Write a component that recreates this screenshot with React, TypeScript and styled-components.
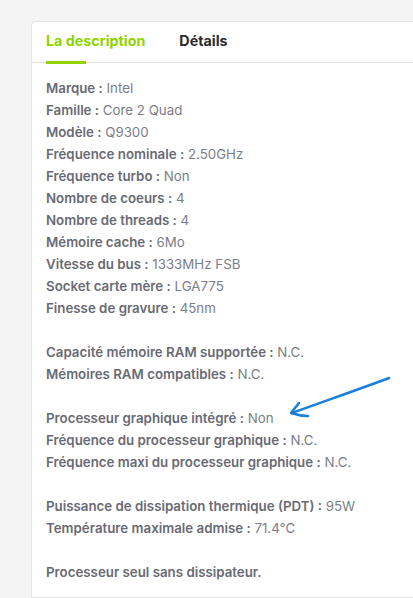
import React from "react";
import styled, { createGlobalStyle } from "styled-components";

const Global = createGlobalStyle`
  html, body { margin: 0; padding: 0; background: #f4f4f4; }
  body { font-family: Inter, "Open Sans", sans-serif; }
`;

const Page = styled.div`
  padding: 21px 0 0 31px;
  height: 598px;
  box-sizing: border-box;
  overflow: hidden;
`;

const Card = styled.div`
  position: relative;
  background: #fff;
  border: 1px solid #e4e4e4;
  border-right: none;
  border-top-left-radius: 5px;
  height: 100%;
  box-sizing: border-box;
`;

const TabBar = styled.div`
  display: flex;
  gap: 34px;
  height: 40px;
  padding-left: 14px;
  border-bottom: 1px solid #e3e3e3;
`;

const Tab = styled.div<{ $active?: boolean }>`
  position: relative;
  display: flex;
  align-items: center;
  padding-bottom: 4px;
  font-size: 14.3px;
  font-weight: 700;
  color: ${(p) => (p.$active ? "#8fd400" : "#2b2b2b")};
  &::after {
    content: "";
    display: ${(p) => (p.$active ? "block" : "none")};
    position: absolute;
    left: 0;
    bottom: -2px;
    width: 40px;
    height: 3px;
    background: #8fd400;
  }
`;

const Body = styled.div`
  padding: 14px 0 0 14px;
  font-size: 13.3px;
  line-height: 22px;
  color: #7b7d88;
`;

const Line = styled.div`
  white-space: nowrap;
  min-height: 22px;
`;

const Label = styled.span`
  font-weight: 600;
  color: #696a74;
`;

const Arrow = styled.svg`
  position: absolute;
  left: 256px;
  top: 352px;
`;

type Row = [string, string] | null | [string];

const rows: Row[] = [
  ["Marque", "Intel"],
  ["Famille", "Core 2 Quad"],
  ["Modèle", "Q9300"],
  ["Fréquence nominale", "2.50GHz"],
  ["Fréquence turbo", "Non"],
  ["Nombre de coeurs", "4"],
  ["Nombre de threads", "4"],
  ["Mémoire cache", "6Mo"],
  ["Vitesse du bus", "1333MHz FSB"],
  ["Socket carte mère", "LGA775"],
  ["Finesse de gravure", "45nm"],
  null,
  ["Capacité mémoire RAM supportée", "N.C."],
  ["Mémoires RAM compatibles", "N.C."],
  null,
  ["Processeur graphique intégré", "Non"],
  ["Fréquence du processeur graphique", "N.C."],
  ["Fréquence maxi du processeur graphique", "N.C."],
  null,
  ["Puissance de dissipation thermique (PDT)", "95W"],
  ["Température maximale admise", "71.4°C"],
  null,
  ["Processeur seul sans dissipateur."],
];

export default function App() {
  return (
    <>
      <Global />
      <Page>
        <Card>
          <TabBar>
            <Tab $active>La description</Tab>
            <Tab>Détails</Tab>
          </TabBar>
          <Body>
            {rows.map((r, i) =>
              r === null ? (
                <Line key={i} />
              ) : r.length === 1 ? (
                <Line key={i}>
                  <Label>{r[0]}</Label>
                </Line>
              ) : (
                <Line key={i}>
                  <Label>{r[0]} :</Label> {r[1]}
                </Line>
              )
            )}
          </Body>
          <Arrow width="110" height="50" viewBox="0 0 110 50">
            <path
              d="M101 4 C80 12 40 26 4 39"
              fill="none"
              stroke="#1b7fdc"
              strokeWidth="2.6"
              strokeLinecap="round"
            />
            <path
              d="M11 29 C8 33 5 36 3 39 C9 41 15 42 20 42"
              fill="none"
              stroke="#1b7fdc"
              strokeWidth="2.6"
              strokeLinecap="round"
              strokeLinejoin="round"
            />
          </Arrow>
        </Card>
      </Page>
    </>
  );
}
